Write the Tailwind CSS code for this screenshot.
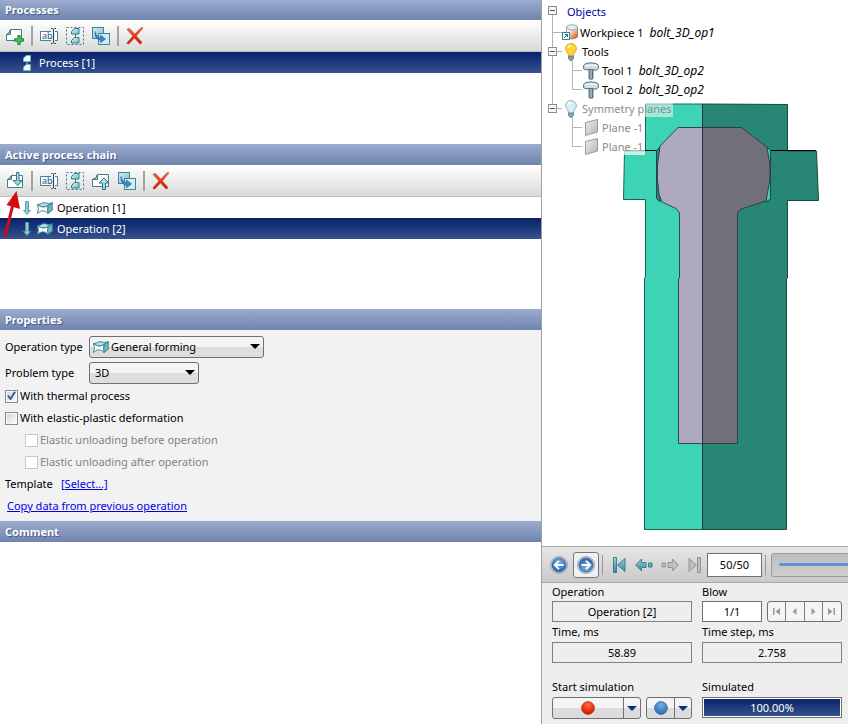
<!DOCTYPE html>
<html lang="en">
<head>
    <meta charset="UTF-8">
    <meta name="viewport" content="width=device-width, initial-scale=1.0">
    <title>Forming simulation</title>
    <script src="https://cdn.jsdelivr.net/npm/@tailwindcss/browser@4"></script>
</head>
<body class="h-screen overflow-hidden bg-white font-['Noto_Sans','Open_Sans',sans-serif] text-[11px] leading-4 text-black">

    <!-- Icons -->
    <svg class="absolute size-0" aria-hidden="true">
        <defs>
            <linearGradient id="teal" x1="0" y1="0" x2="1" y2="1"><stop offset="0" stop-color="#d5eff0"/><stop offset="1" stop-color="#7fbcc6"/></linearGradient>
            <linearGradient id="tealDark" x1="0" y1="0" x2="0" y2="1"><stop offset="0" stop-color="#9ed4d8"/><stop offset="1" stop-color="#2f8794"/></linearGradient>
            <linearGradient id="grey" x1="0" y1="0" x2="1" y2="1"><stop offset="0" stop-color="#eeeeee"/><stop offset="1" stop-color="#b4b4b4"/></linearGradient>
            <linearGradient id="red" x1="0" y1="0" x2="0" y2="1"><stop offset="0" stop-color="#f0795f"/><stop offset="0.5" stop-color="#e03a1c"/><stop offset="1" stop-color="#c41c08"/></linearGradient>
            <linearGradient id="steel" x1="0" y1="0" x2="1" y2="0"><stop offset="0" stop-color="#5f777d"/><stop offset="0.5" stop-color="#b9c3c5"/><stop offset="1" stop-color="#4a6469"/></linearGradient>
            <linearGradient id="hot" x1="0" y1="0" x2="1" y2="1"><stop offset="0.2" stop-color="#ffffff"/><stop offset="0.55" stop-color="#f3b48c"/><stop offset="0.9" stop-color="#d9581a"/></linearGradient>
            <radialGradient id="ballBlue" cx="0.5" cy="0.3" r="0.7"><stop offset="0" stop-color="#76b1e4"/><stop offset="1" stop-color="#2766ab"/></radialGradient>
            <radialGradient id="ballRed" cx="0.5" cy="0.3" r="0.7"><stop offset="0" stop-color="#ff7350"/><stop offset="0.6" stop-color="#f02d0a"/><stop offset="1" stop-color="#b81c02"/></radialGradient>
        </defs>
        <symbol id="i-new" viewBox="0 0 18 18">
            <path d="M4.500 2.500H15.500V13.500H.5V7.500Q3.500 7 4.500 2.500Z" fill="#fff" stroke="#3d7f90"/>
            <path d="M.5 7.500Q3.500 7 4.500 2.500V7.500Z" fill="#b7dce0" stroke="#3d7f90"/>
            <path d="M11.800 8.500h2.400v3.300h3.300v2.400h-3.300v3.300h-2.400v-3.300H8.500v-2.400h3.300z" fill="#56c35c" stroke="#1d8a2a"/>
        </symbol>
        <symbol id="i-select" viewBox="0 0 18 18">
            <rect x=".5" y=".5" width="17" height="17" fill="none" stroke="#2f7f8f" stroke-dasharray="2 2"/>
            <path d="M9.500 7V11" stroke="#2f7f8f"/>
            <path d="M8.500 1.500h4.500v5.500h-7.500V4.500Z" fill="url(#teal)" stroke="#2f7f8f"/>
            <path d="M8.500 10.500h4.500v5.500h-7.500V13.500Z" fill="url(#teal)" stroke="#2f7f8f"/>
        </symbol>
        <symbol id="i-copy" viewBox="0 0 18 18">
            <rect x=".5" y=".5" width="11" height="11" fill="url(#teal)" stroke="#3d8796"/>
            <rect x="6.500" y="6.500" width="11" height="11" fill="#d5ecee" stroke="#3d8796"/>
            <path d="M3 4.500Q4 10 8.500 10.500V8L13.500 12L8.500 15.800V13.500Q2.500 12.500 3 4.500Z" fill="#3b86cc" stroke="#1f5fa4" stroke-width=".6"/>
        </symbol>
        <symbol id="i-delete" viewBox="0 0 18 18">
            <path d="M1 2.500Q3 .5 4.500 2.500L8.800 7.200L15 .8Q16.500 .3 17 1L10.300 8.900L16 15.500Q14.500 18 13 16L8.500 10.900L3 16.800Q1.500 17.500 .8 16L7 9Z" fill="url(#red)" stroke="#c4301a" stroke-width=".6"/>
        </symbol>
        <symbol id="i-import" viewBox="0 0 18 18">
            <path d="M5.500 3.500H16.500V15.500H1.500V7.500Q4.500 7 5.500 3.500Z" fill="#fff" stroke="#3d7f90"/>
            <path d="M1.500 7.500Q4.500 7 5.500 3.500V7.500Z" fill="#b7dce0" stroke="#3d7f90"/>
            <path d="M10.500 .5h2.500v8h3.500L11.800 13.500L7 8.500h3.500z" fill="url(#teal)" stroke="#2c7b89"/>
        </symbol>
        <symbol id="i-export" viewBox="0 0 18 18">
            <path d="M5.500 2.500H16.500V14.500H.5V7.500Q4.500 7 5.500 2.500Z" fill="#fff" stroke="#3d7f90"/>
            <path d="M.5 7.500Q4.500 7 5.500 2.500V7.500Z" fill="#b7dce0" stroke="#3d7f90"/>
            <path d="M10.500 17.500h3v-6.500h3.500L12 6L7 11h3.500z" fill="url(#teal)" stroke="#2c7b89"/>
        </symbol>
        <symbol id="i-process" viewBox="0 0 8 16">
            <path d="M4 6v4" stroke="#9ed4d8"/>
            <path d="M3.500 .5h4v6H.5V3Z" fill="#f2fafa" stroke="#6fb2bc"/>
            <path d="M3.500 9.500h4v6H.5V12Z" fill="#f2fafa" stroke="#6fb2bc"/>
        </symbol>
        <symbol id="i-down" viewBox="0 0 8 14">
            <path d="M2.500 .5h3v9H7.500L4 13.500L.5 9.500H2.500z" fill="#8cc8cf" stroke="#4b9ba7" stroke-width=".9"/>
        </symbol>
        <symbol id="i-forming" viewBox="0 0 16 12">
            <path d="M.5 2.500Q4 2.500 5.500 .8H8.500Q11 2.200 15.500 .8L11 3.500Q6 7 .5 2.500Z" fill="#b5dfe2" stroke="#2f7f8f" stroke-width=".9"/>
            <path d="M11 3.500Q13 2 15.500 .8Q14.800 4.500 15.500 8L11 11.500Q10 7.500 11 3.500Z" fill="#6fb4bf" stroke="#2f7f8f" stroke-width=".9"/>
            <path d="M.5 2.500Q6 7 11 3.500Q10 7.500 11 11.500Q6 6 .5 11.500Q2.200 7 .5 2.500Z" fill="#f4fbfb" stroke="#2f7f8f" stroke-width=".9"/>
        </symbol>
        <symbol id="i-workpiece" viewBox="0 0 17 17">
            <path d="M4.500 3V13Q10 17 15.500 13V3Z" fill="url(#hot)" stroke="#68777e" stroke-width=".7"/>
            <ellipse cx="10" cy="3.300" rx="5.600" ry="2.600" fill="#e3eced" stroke="#7b8f94" stroke-width=".7"/>
            <rect x=".5" y="8.500" width="7" height="7" fill="#fff" stroke="#3a8494"/>
            <path d="M2 14L5.500 10.500M3 10.500h2.500V13" fill="none" stroke="#24677c"/>
        </symbol>
        <symbol id="i-bulb-on" viewBox="0 0 12 18">
            <path d="M6 .6C2.500 .6 .6 3 .6 5.700C.6 8.500 3.500 9.500 3.500 13h5C8.500 9.500 11.400 8.500 11.400 5.700C11.400 3 9.500 .6 6 .6Z" fill="#ffd43c" stroke="#d9a11c" stroke-width=".9"/>
            <path d="M3 5Q3.500 2.500 6 2.400" stroke="#fff6b8" stroke-width="1.500" fill="none"/>
            <path d="M3.500 13.200h5v2.300L6.800 17.500H5.200L3.500 15.500z" fill="#7da0a5" stroke="#42686e" stroke-width=".7"/>
        </symbol>
        <symbol id="i-bulb-off" viewBox="0 0 12 18">
            <path d="M6 .6C2.500 .6 .6 3 .6 5.700C.6 8.500 3.500 9.500 3.500 13h5C8.500 9.500 11.400 8.500 11.400 5.700C11.400 3 9.500 .6 6 .6Z" fill="#d3eef4" stroke="#86aeb8" stroke-width=".9"/>
            <path d="M3 5Q3.500 2.500 6 2.400" stroke="#fff" stroke-width="1.500" fill="none"/>
            <path d="M3.500 13.200h5v2.300L6.800 17.500H5.200L3.500 15.500z" fill="#7fa9b2" stroke="#42737d" stroke-width=".7"/>
        </symbol>
        <symbol id="i-hammer" viewBox="0 0 16 18">
            <path d="M6 6h4v10.800q-2 1-4 0z" fill="url(#steel)" stroke="#3f6269" stroke-width=".8"/>
            <path d="M.6 3.500L3 1.500Q8 .2 13 1.500L15.400 3V6.500L13 8.200Q8 6.800 3 7.800L.6 6.800Z" fill="#d3dedf" stroke="#3f7882"/>
            <path d="M2 3.800Q8 2.200 14 3.800" fill="none" stroke="#fff"/>
        </symbol>
        <symbol id="i-plane" viewBox="0 0 13 17">
            <path d="M.5 3.500L12.500 .5V13L.5 16.500Z" fill="url(#grey)" stroke="#9a9a9a"/>
        </symbol>
        <symbol id="i-round-left" viewBox="0 0 18 18">
            <circle cx="9" cy="9" r="8.500" fill="#d9dde0" stroke="#8b9298" stroke-width=".8"/>
            <circle cx="9" cy="9" r="7" fill="url(#ballBlue)" stroke="#1f5790" stroke-width=".7"/>
            <path d="M13.500 9H5M9 4.800L4.800 9L9 13.200" fill="none" stroke="#fff" stroke-width="1.900"/>
        </symbol>
        <symbol id="i-first" viewBox="0 0 13 16">
            <path d="M.5 .5h3v15h-3zM12 1.500V14.500L4.500 8z" stroke-width=".9"/>
        </symbol>
        <symbol id="i-step" viewBox="0 0 18 14">
            <path d="M.7 7L6.500 1v3.500h4.500v5H6.500V13zM13.500 5h3.500v4h-3.500z" stroke-width=".9"/>
        </symbol>
        <symbol id="i-caret" viewBox="0 0 10 5"><path d="M0 0h10L5 5z"/></symbol>
    </svg>

    <div class="flex h-full">
        <!-- Left column -->
        <main class="relative flex min-w-0 flex-1 flex-col">
            <section class="h-36 shrink-0">
                <h2 class="h-5 bg-linear-to-b from-[#9dacce] to-[#6f84ae] px-[5px] leading-5 font-bold text-white text-shadow-[1px_1px_1px_#42568a]">Processes</h2>
                <div class="flex h-8 items-center border-b border-[#bdbdbd] bg-linear-to-b from-white to-[#dadada] pl-[2px]">
                    <button class="flex w-[26px] justify-center" aria-label="New process"><svg class="size-[18px]"><use href="#i-new"/></svg></button>
                    <span class="mx-[3px] h-5 w-[2px] bg-[#a3a3a3]"></span>
                    <button class="flex w-[26px] justify-center" aria-label="Rename">
                        <svg class="size-[18px]" viewBox="0 0 18 18">
                            <path d="M11 4.500H.5V13.500H11M15 4.500h2.500V13.500H15" fill="#fff" stroke="#3d8796"/>
                            <text x="2" y="12" font-size="9" fill="#1c4fa0">ab</text>
                            <path d="M11 1.500h1.500l1 .8 1-.8H16M13.500 2v14M11 16.500h1.500l1-.8 1 .8H16" fill="none" stroke="#444"/>
                        </svg>
                    </button>
                    <button class="flex w-[26px] justify-center" aria-label="Select all"><svg class="size-[18px]"><use href="#i-select"/></svg></button>
                    <button class="flex w-[26px] justify-center" aria-label="Copy"><svg class="size-[18px]"><use href="#i-copy"/></svg></button>
                    <span class="mx-[3px] h-5 w-[2px] bg-[#a3a3a3]"></span>
                    <button class="flex w-[26px] justify-center" aria-label="Delete"><svg class="size-[18px]"><use href="#i-delete"/></svg></button>
                </div>
                <ul>
                    <li class="flex h-[21px] items-center gap-2 bg-linear-to-b from-[#07206a] to-[#36528f] pl-[23px] text-white"><svg class="h-4 w-2"><use href="#i-process"/></svg>Process [1]</li>
                </ul>
            </section>

            <section class="h-[165px] shrink-0">
                <h2 class="h-[21px] bg-linear-to-b from-[#9dacce] to-[#6f84ae] px-[5px] leading-[21px] font-bold text-white text-shadow-[1px_1px_1px_#42568a]">Active process chain</h2>
                <div class="flex h-8 items-center border-b border-[#bdbdbd] bg-linear-to-b from-white to-[#dadada] pl-[2px]">
                    <button class="flex w-[26px] justify-center" aria-label="Add operation"><svg class="size-[18px]"><use href="#i-import"/></svg></button>
                    <span class="mx-[3px] h-5 w-[2px] bg-[#a3a3a3]"></span>
                    <button class="flex w-[26px] justify-center" aria-label="Rename">
                        <svg class="size-[18px]" viewBox="0 0 18 18">
                            <path d="M11 4.500H.5V13.500H11M15 4.500h2.500V13.500H15" fill="#fff" stroke="#3d8796"/>
                            <text x="2" y="12" font-size="9" fill="#1c4fa0">ab</text>
                            <path d="M11 1.500h1.500l1 .8 1-.8H16M13.500 2v14M11 16.500h1.500l1-.8 1 .8H16" fill="none" stroke="#444"/>
                        </svg>
                    </button>
                    <button class="flex w-[26px] justify-center" aria-label="Select all"><svg class="size-[18px]"><use href="#i-select"/></svg></button>
                    <button class="flex w-[26px] justify-center" aria-label="Export"><svg class="size-[18px]"><use href="#i-export"/></svg></button>
                    <button class="flex w-[26px] justify-center" aria-label="Copy"><svg class="size-[18px]"><use href="#i-copy"/></svg></button>
                    <span class="mx-[3px] h-5 w-[2px] bg-[#a3a3a3]"></span>
                    <button class="flex w-[26px] justify-center" aria-label="Delete"><svg class="size-[18px]"><use href="#i-delete"/></svg></button>
                </div>
                <ul>
                    <li class="flex h-[21px] items-center pl-[23px]"><svg class="h-[14px] w-2"><use href="#i-down"/></svg><svg class="mr-1 ml-[6px] h-3 w-4"><use href="#i-forming"/></svg>Operation [1]</li>
                    <li class="flex h-[21px] items-center bg-linear-to-b from-[#07206a] to-[#36528f] pl-[23px] text-white"><svg class="h-[14px] w-2"><use href="#i-down"/></svg><svg class="mr-1 ml-[6px] h-3 w-4"><use href="#i-forming"/></svg>Operation [2]</li>
                </ul>
            </section>

            <!-- Pointer to the add button -->
            <svg class="pointer-events-none absolute top-[190px] left-0 h-12 w-6" viewBox="0 0 24 48">
                <path d="M5 47L13 14" stroke="#d40b12" stroke-width="3"/>
                <path d="M16.500 1L20 19L6.500 15Z" fill="#d40b12"/>
            </svg>

            <section class="shrink-0 bg-[#f2f2f2] pb-1">
                <h2 class="h-[21px] bg-linear-to-b from-[#9dacce] to-[#6f84ae] px-[5px] leading-[21px] font-bold text-white text-shadow-[1px_1px_1px_#42568a]">Properties</h2>
                <form>
                    <div class="mt-[6px] flex items-center pl-[5px]">
                        <label for="optype" class="w-[84px] whitespace-nowrap">Operation type</label>
                        <div class="relative">
                            <select id="optype" class="block h-[22px] w-[175px] appearance-none rounded-[3px] border border-[#707070] bg-linear-to-b from-[#f4f4f4] from-50% to-[#dedede] to-50% pl-[21px] leading-4"><option>General forming</option></select>
                            <svg class="pointer-events-none absolute top-[5px] left-1 h-3 w-4"><use href="#i-forming"/></svg>
                            <svg class="pointer-events-none absolute top-2 right-1 h-[5px] w-[10px]"><use href="#i-caret"/></svg>
                        </div>
                    </div>
                    <div class="mt-1 mb-px flex items-center pl-[5px]">
                        <label for="problem" class="w-[84px] whitespace-nowrap">Problem type</label>
                        <div class="relative">
                            <select id="problem" class="block h-[22px] w-[110px] appearance-none rounded-[3px] border border-[#707070] bg-linear-to-b from-[#f4f4f4] from-50% to-[#dedede] to-50% pl-[5px] leading-4"><option>3D</option></select>
                            <svg class="pointer-events-none absolute top-2 right-1 h-[5px] w-[10px]"><use href="#i-caret"/></svg>
                        </div>
                    </div>
                    <label class="relative flex h-[22px] items-center gap-[2px] pl-[5px]">
                        <input type="checkbox" checked class="size-[13px] appearance-none border border-[#8a8a8a] bg-linear-to-br from-[#cfd3da] to-white shadow-[inset_0_0_0_1px_#fafafa]">
                        <svg class="absolute top-[6px] left-[7px] size-[9px]" viewBox="0 0 9 9"><path d="M1 4.500L3.500 8L8 .8" fill="none" stroke="#41599c" stroke-width="2"/></svg>
                        With thermal process
                    </label>
                    <label class="flex h-[22px] items-center gap-[2px] pl-[5px]">
                        <input type="checkbox" class="size-[13px] appearance-none border border-[#8a8a8a] bg-linear-to-br from-[#cfd3da] to-white shadow-[inset_0_0_0_1px_#fafafa]">
                        With elastic-plastic deformation
                    </label>
                    <label class="flex h-[22px] items-center gap-[2px] pl-[25px] text-[#838383]">
                        <input type="checkbox" disabled class="size-[13px] appearance-none border border-[#c8c8c8] bg-white">
                        Elastic unloading before operation
                    </label>
                    <label class="flex h-[22px] items-center gap-[2px] pl-[25px] text-[#838383]">
                        <input type="checkbox" disabled class="size-[13px] appearance-none border border-[#c8c8c8] bg-white">
                        Elastic unloading after operation
                    </label>
                    <div class="flex h-[22px] items-center pl-[5px]"><span class="w-14">Template</span><a href="#" class="text-[#0000e6] underline">[Select...]</a></div>
                    <div class="flex h-[22px] items-center pl-[7px]"><a href="#" class="text-[#0000e6] underline">Copy data from previous operation</a></div>
                </form>
            </section>

            <section class="flex min-h-0 flex-1 flex-col">
                <h2 class="h-[21px] bg-linear-to-b from-[#9dacce] to-[#6f84ae] px-[5px] leading-[21px] font-bold text-white text-shadow-[1px_1px_1px_#42568a]">Comment</h2>
                <textarea class="flex-1 resize-none p-1 outline-none" aria-label="Comment"></textarea>
            </section>
        </main>

        <!-- Right column -->
        <aside class="flex w-[307px] shrink-0 flex-col border-l border-[#a0a0a0]">
            <div class="relative min-h-0 flex-1">
                <!-- Section view of the dies and the bolt -->
                <svg class="absolute inset-0 size-full" viewBox="542 0 306 546" preserveAspectRatio="xMidYMin meet" stroke-linejoin="round">
                    <path d="M645.500 104H702.500V529.500H644.500V278L645.500 277V199.500H623.500L624.500 151H645.500Z" fill="#3dd3b5" stroke="#1d6354"/>
                    <path d="M702.500 104L787.500 104.500V151L816.500 151L818.500 200.500H787.500V278L786.500 279V529.500H702.500Z" fill="#288674" stroke="#154c41"/>
                    <path d="M624 150.500H657M771 150.500H816" stroke="#000"/>
                    <path d="M656.500 150.500L660 147V202L656.500 198.500Z" fill="#288674" stroke="#1d4a42"/>
                    <path d="M767 147L770.500 150.500V199L766 202Z" fill="#3dd3b5" stroke="#1d4a42"/>
                    <path d="M702.500 127.500H678L660 146L657.500 165V180L659 194L662 202L676 208.500L679.500 213V278L678.500 279V443.500H702.500Z" fill="#adaac0"/>
                    <path d="M702.500 127.500H741.500L767 147L770 165V179L766 201L741 209L737.500 213V443.500H702.500Z" fill="#706f7a"/>
                    <path d="M702.500 127.500H678L660 146L657.500 165V180L659 194L662 202L676 208.500L679.500 213V278L678.500 279V443.500H737.500V213L741 209L766 201L770 179V165L767 147L741.500 127.500Z" fill="none" stroke="#2e3839" stroke-width=".9"/>
                    <path d="M702.500 104V529" stroke="#26333a"/>
                </svg>

                <!-- Object tree -->
                <div class="relative">
                    <svg class="absolute top-0 left-0 h-40 w-11" viewBox="0 0 44 160" fill="none" stroke="#b4b4b4" shape-rendering="crispEdges">
                        <path d="M10.500 15V104M10.500 32.500H24M15 51.500H20M15 108.500H20M30.500 61V89.500H40M30.500 70.500H40M30.500 118V146.500H40M30.500 127.500H40"/>
                        <path d="M6.500 6.500h8v8h-8zM6.500 47.500h8v8h-8zM6.500 104.500h8v8h-8z" fill="#f6f6f6" stroke="#8c8c8c"/>
                        <path d="M8 10.500h5M8 51.500h5M8 108.500h5" stroke="#3a52a8"/>
                    </svg>
                    <ul class="relative">
                        <li class="flex h-[23px] items-center pl-[25px] text-[#00009c]">Objects</li>
                        <li class="flex h-[19px] items-center pl-5"><svg class="mr-px size-[17px]"><use href="#i-workpiece"/></svg>Workpiece 1<i class="pl-[6px] text-xs">bolt_3D_op1</i></li>
                        <li class="flex h-[19px] items-center pl-[23px]"><svg class="mr-[5px] h-[18px] w-3"><use href="#i-bulb-on"/></svg>Tools</li>
                        <li class="flex h-[19px] items-center pl-[41px]"><svg class="mr-[3px] h-[18px] w-4"><use href="#i-hammer"/></svg>Tool 1<i class="pl-[6px] text-xs">bolt_3D_op2</i></li>
                        <li class="flex h-[19px] items-center pl-[41px]"><svg class="mr-[3px] h-[18px] w-4"><use href="#i-hammer"/></svg>Tool 2<i class="pl-[6px] text-xs">bolt_3D_op2</i></li>
                        <li class="flex h-[19px] items-center pl-[23px] text-[#8a8a8a]"><svg class="mr-[5px] h-[18px] w-3"><use href="#i-bulb-off"/></svg><span class="bg-white/50 pr-[2px]">Symmetry planes</span></li>
                        <li class="flex h-[19px] items-center pl-[43px] text-[#8a8a8a]"><svg class="mr-1 h-[17px] w-[13px]"><use href="#i-plane"/></svg><span class="bg-white/70 pr-[2px]">Plane -1</span></li>
                        <li class="flex h-[19px] items-center pl-[43px] text-[#8a8a8a]"><svg class="mr-1 h-[17px] w-[13px]"><use href="#i-plane"/></svg><span class="bg-white/70 pr-[2px]">Plane -1</span></li>
                    </ul>
                </div>
            </div>

            <!-- Playback bar -->
            <div class="flex h-[37px] shrink-0 items-center overflow-hidden border-y border-[#a8a8a8] bg-linear-to-b from-[#e6e6e6] to-[#c9c9c9] pl-2">
                <button class="shrink-0" aria-label="Previous operation"><svg class="size-[18px]"><use href="#i-round-left"/></svg></button>
                <button class="ml-[5px] flex size-[26px] shrink-0 items-center justify-center rounded-[3px] border border-[#777] bg-[#f0f0f0]" aria-label="Next operation"><svg class="size-[18px] rotate-180"><use href="#i-round-left"/></svg></button>
                <span class="ml-[3px] h-5 w-px shrink-0 bg-[#999]"></span>
                <button class="ml-[10px] shrink-0" aria-label="First record"><svg class="h-4 w-[13px] fill-[url(#tealDark)] stroke-[#2c7b89]"><use href="#i-first"/></svg></button>
                <button class="ml-[9px] shrink-0" aria-label="Previous record"><svg class="h-[14px] w-[18px] fill-[url(#tealDark)] stroke-[#2c7b89]"><use href="#i-step"/></svg></button>
                <button class="ml-2 shrink-0" aria-label="Next record"><svg class="h-[14px] w-[18px] rotate-180 fill-[#bebebe] stroke-[#8e8e8e]"><use href="#i-step"/></svg></button>
                <button class="ml-[9px] shrink-0" aria-label="Last record"><svg class="h-4 w-[13px] rotate-180 fill-[#bebebe] stroke-[#8e8e8e]"><use href="#i-first"/></svg></button>
                <input type="text" value="50/50" aria-label="Record" class="ml-[6px] h-6 w-[55px] shrink-0 border border-[#707070] bg-white text-center">
                <span class="ml-[3px] h-5 w-px shrink-0 bg-[#999]"></span>
                <div class="ml-[5px] flex h-6 w-60 shrink-0 items-center rounded-[3px] border border-[#999] bg-linear-to-b from-[#bdbdbd] to-[#cfcfcf] px-[7px]">
                    <input type="range" min="1" max="50" value="50" aria-label="Record position" class="h-[3px] w-full appearance-none rounded-full bg-[#5f92dc]">
                </div>
            </div>

            <!-- Simulation state -->
            <div class="grid shrink-0 grid-cols-2 gap-x-[10px] bg-[#eeeeee] pr-[6px] pb-[5px] pl-[10px]">
                <div>
                    <label for="operation" class="block h-[18px] leading-[18px]">Operation</label>
                    <input id="operation" type="text" readonly value="Operation [2]" class="block h-[21px] w-full border border-[#808080] bg-[#eeeeee] text-center">
                </div>
                <div>
                    <label for="blow" class="block h-[18px] leading-[18px]">Blow</label>
                    <div class="flex gap-[5px]">
                        <input id="blow" type="text" value="1/1" class="h-[21px] min-w-0 flex-1 border border-[#707070] bg-white text-center">
                        <div class="grid h-[21px] w-[75px] grid-cols-4 divide-x divide-[#808080] rounded-[3px] border border-[#707070] bg-[#f4f4f4]">
                            <button class="flex items-center justify-center" aria-label="First blow"><svg class="size-[7px] fill-[#999]" viewBox="0 0 7 7"><path d="M0 0h1.500v7H0zM7 0v7L2.500 3.500z"/></svg></button>
                            <button class="flex items-center justify-center" aria-label="Previous blow"><svg class="size-[7px] fill-[#999]" viewBox="0 0 7 7"><path d="M5.500 0v7L1.500 3.500z"/></svg></button>
                            <button class="flex items-center justify-center" aria-label="Next blow"><svg class="size-[7px] fill-[#999]" viewBox="0 0 7 7"><path d="M1.500 0v7L5.500 3.500z"/></svg></button>
                            <button class="flex items-center justify-center" aria-label="Last blow"><svg class="size-[7px] fill-[#999]" viewBox="0 0 7 7"><path d="M5.500 0h1.500v7H5.500zM0 0v7L4.500 3.500z"/></svg></button>
                        </div>
                    </div>
                </div>
                <div>
                    <label for="time" class="block h-5 leading-5">Time, ms</label>
                    <input id="time" type="text" readonly value="58.89" class="block h-[21px] w-full border border-[#808080] bg-[#eeeeee] text-center">
                </div>
                <div>
                    <label for="step" class="block h-5 leading-5">Time step, ms</label>
                    <input id="step" type="text" readonly value="2.758" class="block h-[21px] w-full border border-[#808080] bg-[#eeeeee] text-center">
                </div>
                <div class="pt-[14px]">
                    <p class="h-5 leading-5">Start simulation</p>
                    <div class="flex h-[22px] gap-[5px]">
                        <div class="flex flex-1 divide-x divide-[#707070] rounded-[3px] border border-[#707070] bg-linear-to-b from-[#f4f4f4] from-50% to-[#dcdcdc] to-50%">
                            <button class="flex flex-1 items-center justify-center" aria-label="Start"><svg class="size-[14px]" viewBox="0 0 14 14"><circle cx="7" cy="7" r="6.400" fill="url(#ballRed)" stroke="#b93c22" stroke-width=".8"/></svg></button>
                            <button class="flex w-4 items-center justify-center" aria-label="Start options"><svg class="h-[5px] w-[10px] fill-[#0d2f85]"><use href="#i-caret"/></svg></button>
                        </div>
                        <div class="flex w-[46px] divide-x divide-[#707070] rounded-[3px] border border-[#707070] bg-linear-to-b from-[#f4f4f4] from-50% to-[#dcdcdc] to-50%">
                            <button class="flex flex-1 items-center justify-center" aria-label="Stop"><svg class="size-[14px]" viewBox="0 0 14 14"><circle cx="7" cy="7" r="6.400" fill="url(#ballBlue)" stroke="#3b6f9f" stroke-width=".8"/></svg></button>
                            <button class="flex w-4 items-center justify-center" aria-label="Stop options"><svg class="h-[5px] w-[10px] fill-[#0d2f85]"><use href="#i-caret"/></svg></button>
                        </div>
                    </div>
                </div>
                <div class="pt-[14px]">
                    <p id="simulated" class="h-5 leading-5">Simulated</p>
                    <div role="progressbar" aria-labelledby="simulated" aria-valuenow="100" class="relative h-[21px] border border-[#707070] bg-white p-px">
                        <div class="h-full bg-linear-to-b from-[#0a2468] to-[#35518e]" style="width: 100%"></div>
                        <span class="absolute inset-0 text-center leading-[19px] text-white">100.00%</span>
                    </div>
                </div>
            </div>
        </aside>
    </div>
</body>
</html>
